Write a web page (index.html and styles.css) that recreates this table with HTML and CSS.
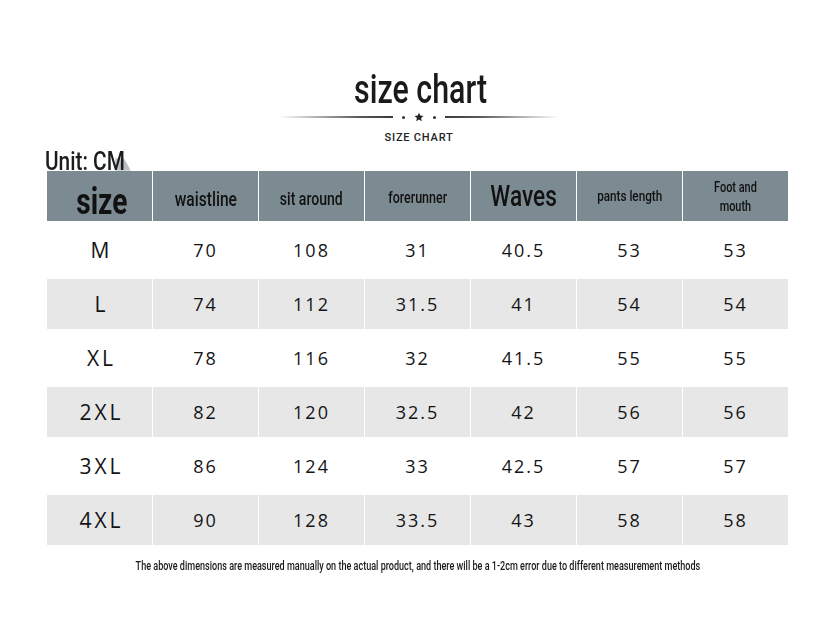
FILE: index.html
```html
<!DOCTYPE html>
<html lang="en">
<head>
    <meta charset="UTF-8">
    <meta name="viewport" content="width=device-width, initial-scale=1.0">
    <title>size chart</title>
    <link rel="stylesheet" href="styles.css">
</head>
<body>
    <div class="page">
        <div class="heading">
            <h1 class="title"><span class="narrow">size chart</span></h1>
            <div class="divider">
                <span class="rule rule-left"></span>
                <span class="dot"></span>
                <svg class="star" width="10" height="10" viewBox="0 0 24 24"><path d="M12 1.5l3.1 7.1 7.7.7-5.8 5.1 1.7 7.6L12 18l-6.7 4 1.7-7.6-5.8-5.1 7.7-.7z" fill="#222"/></svg>
                <span class="dot"></span>
                <span class="rule rule-right"></span>
            </div>
            <p class="subtitle">SIZE CHART</p>
        </div>

        <div class="unit"><span class="narrow">Unit: CM</span></div>

        <div class="chart">
            <div class="row head">
                <div class="cell cell-size"><span class="narrow">size</span></div>
                <div class="cell h-waist"><span class="narrow">waistline</span></div>
                <div class="cell h-sit"><span class="narrow">sit around</span></div>
                <div class="cell h-fore"><span class="narrow">forerunner</span></div>
                <div class="cell h-waves"><span class="narrow">Waves</span></div>
                <div class="cell h-pants"><span class="narrow">pants length</span></div>
                <div class="cell h-foot"><span class="narrow">Foot and<br>mouth</span></div>
            </div>
            <div class="row">
                <div class="cell size">M</div>
                <div class="cell">70</div>
                <div class="cell">108</div>
                <div class="cell">31</div>
                <div class="cell">40.5</div>
                <div class="cell">53</div>
                <div class="cell">53</div>
            </div>
            <div class="row shaded">
                <div class="cell size">L</div>
                <div class="cell">74</div>
                <div class="cell">112</div>
                <div class="cell">31.5</div>
                <div class="cell">41</div>
                <div class="cell">54</div>
                <div class="cell">54</div>
            </div>
            <div class="row">
                <div class="cell size">XL</div>
                <div class="cell">78</div>
                <div class="cell">116</div>
                <div class="cell">32</div>
                <div class="cell">41.5</div>
                <div class="cell">55</div>
                <div class="cell">55</div>
            </div>
            <div class="row shaded">
                <div class="cell size">2XL</div>
                <div class="cell">82</div>
                <div class="cell">120</div>
                <div class="cell">32.5</div>
                <div class="cell">42</div>
                <div class="cell">56</div>
                <div class="cell">56</div>
            </div>
            <div class="row">
                <div class="cell size">3XL</div>
                <div class="cell">86</div>
                <div class="cell">124</div>
                <div class="cell">33</div>
                <div class="cell">42.5</div>
                <div class="cell">57</div>
                <div class="cell">57</div>
            </div>
            <div class="row shaded">
                <div class="cell size">4XL</div>
                <div class="cell">90</div>
                <div class="cell">128</div>
                <div class="cell">33.5</div>
                <div class="cell">43</div>
                <div class="cell">58</div>
                <div class="cell">58</div>
            </div>
        </div>

        <p class="note"><span class="narrow">The above dimensions are measured manually on the actual product, and there will be a 1-2cm error due to different measurement methods</span></p>
    </div>
</body>
</html>
```

FILE: styles.css
```css
body {
    margin: 0;
    background-color: #ffffff;
    color: #161616;
    font-family: Roboto, 'Liberation Sans', sans-serif;
}
.page {
    width: 834px;
    height: 626px;
    overflow: hidden;
}
.narrow {
    display: inline-block;
    transform: scaleX(0.78);
    white-space: nowrap;
}
.heading {
    padding-top: 70px;
    text-align: center;
}
.title {
    margin: 0 0 0 8px;
    font-size: 40px;
    line-height: 40px;
    font-weight: 500;
    color: #1a1a1a;
}
.title .narrow {
    transform: scaleX(0.76);
}
.divider {
    display: flex;
    align-items: center;
    justify-content: center;
    height: 10px;
    margin-top: 2px;
    margin-left: 3px;
}
.rule {
    width: 114px;
    height: 2px;
}
.rule-left {
    background: linear-gradient(to right, rgba(90, 90, 90, 0), #5a5a5a 70%, #3a3a3a);
}
.rule-right {
    background: linear-gradient(to left, rgba(90, 90, 90, 0), #5a5a5a 70%, #3a3a3a);
}
.dot {
    width: 3px;
    height: 3px;
    border-radius: 50%;
    background-color: #333;
    margin: 0 9px;
}
.star {
    display: block;
}
.subtitle {
    margin: 9px 0 0 4px;
    font-size: 11px;
    line-height: 13px;
    font-weight: 500;
    letter-spacing: 0.8px;
    color: #222;
}
.unit {
    position: relative;
    margin: 7px 0 0 45px;
    font-size: 26px;
    line-height: 20px;
    font-weight: 500;
    color: #1c1c1c;
}
.unit .narrow {
    transform: scaleX(0.8);
    transform-origin: left center;
    position: relative;
    z-index: 1;
}
.unit::after {
    content: "";
    position: absolute;
    left: 70px;
    top: 7px;
    width: 16px;
    height: 13px;
    background-color: rgba(125, 134, 139, 0.55);
    clip-path: polygon(0 0, 55% 0, 100% 100%, 0 100%);
    filter: blur(1px);
}
.chart {
    margin-left: 47px;
    width: 741px;
    display: flex;
    flex-direction: column;
    gap: 4px;
}
.row {
    display: grid;
    grid-template-columns: repeat(7, 1fr);
    column-gap: 1px;
    height: 50px;
}
.cell {
    display: flex;
    align-items: center;
    justify-content: center;
    font-family: 'Open Sans', 'Noto Sans', sans-serif;
    font-size: 18px;
    letter-spacing: 2px;
    color: #141414;
}
.cell.size {
    font-size: 21px;
    letter-spacing: 3px;
    padding-left: 4px;
}
.shaded .cell {
    background-color: #e7e7e8;
}
.head .cell {
    background-color: #7c8a91;
    font-family: Roboto, 'Liberation Sans', sans-serif;
    font-weight: 500;
    letter-spacing: 0;
    color: #111;
    text-align: center;
}
.head .cell-size {
    align-items: flex-end;
    font-size: 36px;
    line-height: 38px;
    font-weight: 700;
    padding-left: 4px;
}
.h-waist {
    font-size: 20px;
    padding-top: 5px;
}
.h-sit {
    font-size: 18px;
    padding-top: 4px;
}
.h-fore {
    font-size: 16px;
    padding-top: 2px;
}
.h-waves {
    font-size: 29px;
}
.h-pants {
    font-size: 15px;
}
.h-foot {
    font-size: 14px;
    line-height: 19px;
    padding-top: 2px;
}
.note {
    margin: 14px 0 0 2px;
    text-align: center;
    font-size: 12px;
    line-height: 14px;
    font-weight: 500;
    color: #1a1a1a;
}
.note .narrow {
    transform: scaleX(0.755);
}
```
